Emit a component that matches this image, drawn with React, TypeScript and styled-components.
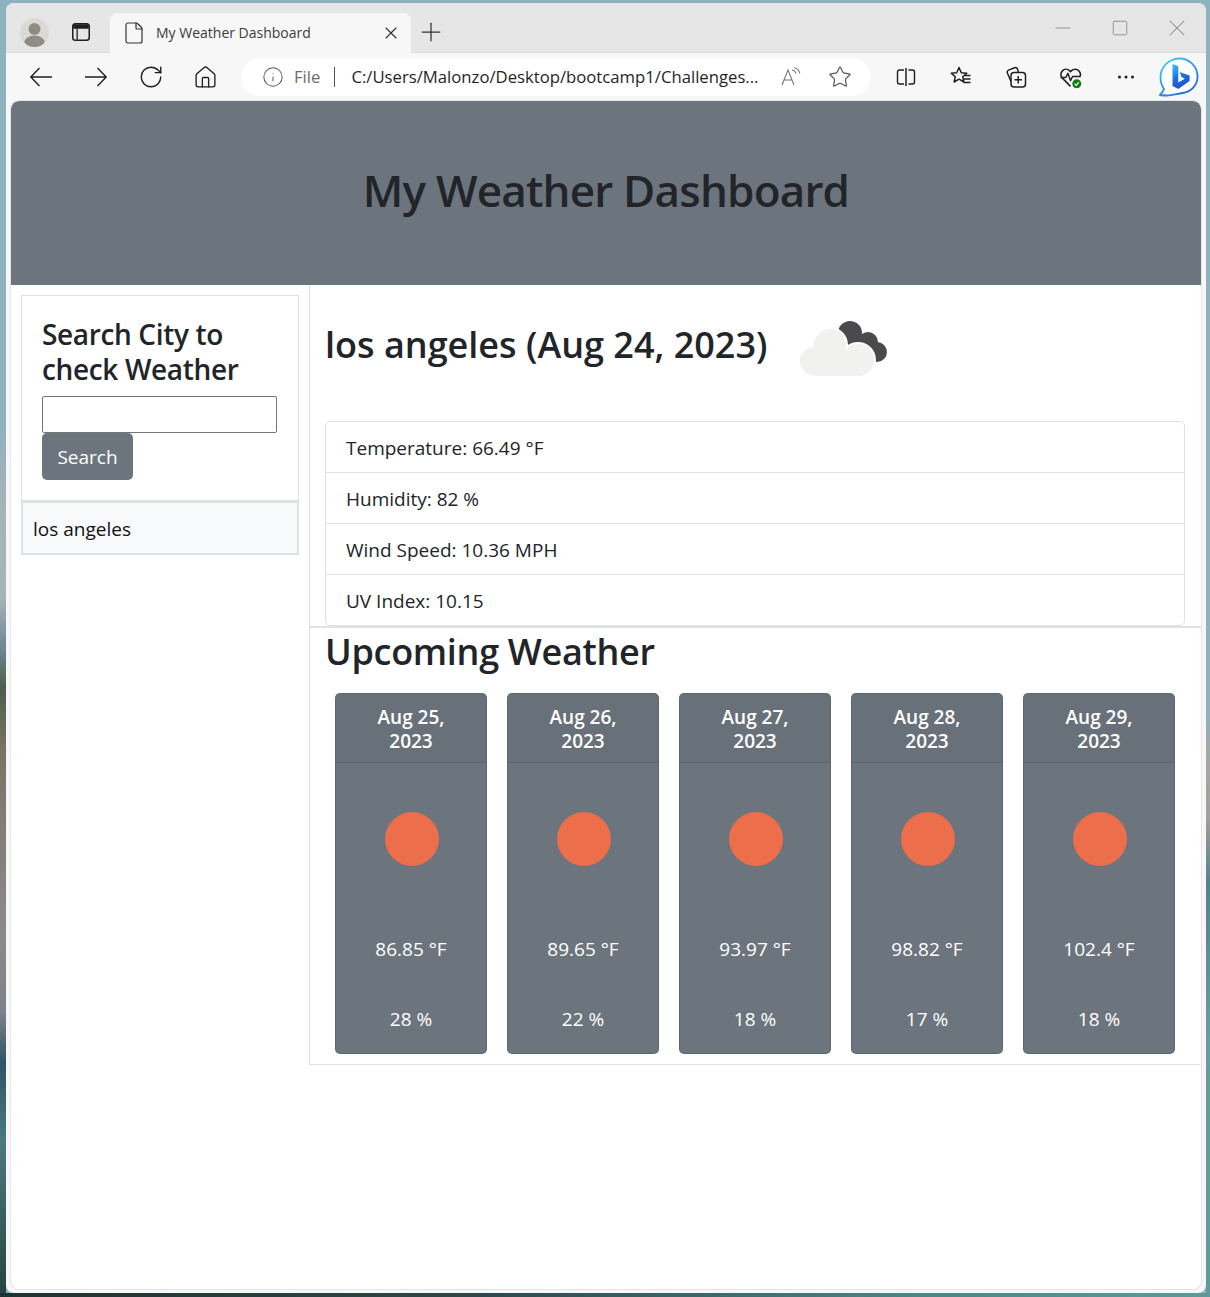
import React from 'react';
import styled, { createGlobalStyle } from 'styled-components';
import { RotateCw, Home, Info, Star, X, Plus, Minus, Square, File } from 'lucide-react';

const GlobalStyle = createGlobalStyle`
  html, body {
    margin: 0;
    padding: 0;
  }
  * {
    box-sizing: border-box;
  }
  body {
    font-family: "Open Sans", "Noto Sans", sans-serif;
    font-stretch: 94%;
    color: #212529;
  }
`;

// the wallpaper only shows as thin strips round the window
const Desktop = styled.div`
  width: 1210px;
  height: 1297px;
  padding: 3px 4px 4px 6px;
  overflow: hidden;
  background-color: #8fb2bf;
  background-repeat: no-repeat;
  background-image:
    linear-gradient(90deg, #1c3233 0%, #2c4a4b 40%, #4d8486 75%, #5f9a9b 100%),
    linear-gradient(180deg, #8fb2bf 0%, #8fb2bf 33%, #a7b1b8 38%, #a9b4ba 46%, #6d8794 50%, #4c5f4e 53%, #7c7268 58%, #8d8a8c 72%, #7d8288 78%, #2f5368 82%, #4c7a7e 88%, #25433f 100%),
    linear-gradient(180deg, #8fb2bf 0%, #8fb2bf 54%, #a5a5a0 60%, #a09f9c 63%, #56828c 68%, #6d9a9e 80%, #5f9a9b 100%);
  background-size: 100% 4px, 6px 100%, 4px 100%;
  background-position: bottom left, top left, top right;
`;

const BrowserWindow = styled.div`
  height: 100%;
  display: flex;
  flex-direction: column;
  background: #f7f7f7;
  border-radius: 8px;
  overflow: hidden;
`;

const TabStrip = styled.div`
  height: 50px;
  flex: none;
  display: flex;
  align-items: flex-end;
  background: #e6e6e6;
  border-bottom: 1px solid #dcdcdc;
  padding-left: 14px;
`;

const Avatar = styled.div`
  width: 29px;
  height: 29px;
  margin-bottom: 5px;
  border-radius: 50%;
  background: #dbd9d6;
  overflow: hidden;
`;

const PanelButton = styled.div`
  width: 61px;
  height: 40px;
  padding-left: 3px;
  display: flex;
  align-items: center;
  justify-content: center;
`;

const Tab = styled.div`
  width: 301px;
  height: 40px;
  flex: none;
  display: flex;
  align-items: center;
  padding: 0 10px 0 12px;
  margin-bottom: -1px;
  background: #f7f7f7;
  border-radius: 8px 8px 0 0;
  font-size: 14px;
  color: #3b3b3b;
`;

const TabTitle = styled.span`
  flex: 1;
  margin: 0 0 2px 10px;
`;

const NewTabButton = styled.div`
  width: 40px;
  height: 40px;
  display: flex;
  align-items: center;
  justify-content: center;
`;

const WindowButtons = styled.div`
  margin-left: auto;
  height: 100%;
  display: flex;
  align-items: center;
  padding: 0 1px 0 0;
`;

const WindowButton = styled.div`
  width: 57px;
  height: 32px;
  display: flex;
  align-items: center;
  justify-content: center;
  color: #8a8a8a;
`;

const Toolbar = styled.div`
  height: 47px;
  flex: none;
  display: flex;
  align-items: center;
  padding: 1px 0 0 7px;
`;

const NavButton = styled.div`
  width: 55px;
  height: 36px;
  flex: none;
  display: flex;
  align-items: center;
  justify-content: center;
  color: #1f1f1f;
`;

const AddressBar = styled.div`
  width: 630px;
  height: 38px;
  flex: none;
  margin: 0 7px 0 8px;
  display: flex;
  align-items: center;
  padding: 0 19px 0 21px;
  background: #ffffff;
  border-radius: 19px;
  font-size: 16.7px;
  color: #1f1f1f;
`;

const SchemeLabel = styled.span`
  margin: 0 0 2px 10px;
  color: #6d6d6d;
`;

const SchemeDivider = styled.span`
  width: 1px;
  height: 20px;
  margin: 0 16px 0 14px;
  background: #555555;
`;

const UrlText = styled.span`
  flex: 1;
  margin-bottom: 2px;
  white-space: nowrap;
`;

const ReadAloud = styled.svg`
  margin-right: 26px;
`;

const BingButton = styled.div`
  margin: 0 0 1px 6px;
  width: 40px;
  height: 40px;
  flex: none;
`;

const PageFrame = styled.div`
  flex: 1;
  min-height: 0;
  margin: 1px 5px 4px 5px;
  background: #ffffff;
  border-radius: 8px;
  box-shadow: 0 0 0 1px #e4e4e4;
  overflow: hidden;
`;

const PageHeader = styled.header`
  height: 184px;
  padding-bottom: 5px;
  display: flex;
  align-items: center;
  justify-content: center;
  background: #6c757d;
  border-radius: 8px 8px 0 0;
`;

const PageTitle = styled.h1`
  margin: 0;
  font-size: 44px;
  font-weight: 600;
  line-height: 1.2;
  letter-spacing: -0.8px;
  color: #212529;
`;

const Columns = styled.div`
  display: flex;
  align-items: flex-start;
`;

const Sidebar = styled.aside`
  width: 298px;
  flex: none;
  padding: 10px 10px 0 10px;
`;

const SearchCard = styled.section`
  height: 206px;
  padding: 21px 20px 0 20px;
  border: 1px solid #dee2e6;
`;

const SearchTitle = styled.h3`
  margin: 0 0 9px 0;
  font-size: 28px;
  font-weight: 600;
  line-height: 35px;
  letter-spacing: -0.35px;
`;

const SearchInput = styled.input`
  display: block;
  width: 235px;
  height: 37px;
  border: 1px solid #767676;
  border-radius: 2px;
  background: #ffffff;
`;

const SearchButton = styled.button`
  display: block;
  width: 91px;
  height: 47px;
  padding: 0;
  border: none;
  border-radius: 5px;
  background: #6c757d;
  color: #ffffff;
  font: inherit;
  font-size: 19px;
`;

const HistoryItem = styled.div`
  height: 54px;
  display: flex;
  align-items: center;
  padding: 1px 10px 0 10px;
  background: #f8f9fa;
  border: 2px solid #dee2e6;
  font-size: 19px;
  color: #111111;
`;

const Main = styled.main`
  flex: 1;
  min-width: 0;
  border-left: 1px solid #dee2e6;
`;

const TodaySection = styled.section`
  height: 343px;
  padding: 0 16px 0 15px;
  border-bottom: 2px solid #dee2e6;
`;

const CityRow = styled.div`
  height: 136px;
  display: flex;
  align-items: center;
`;

const CityTitle = styled.h2`
  margin: 0 0 16px 0;
  font-size: 36px;
  font-weight: 600;
  line-height: 1.2;
`;

const CloudIcon = styled.svg`
  flex: none;
  margin: 0 0 9px 33px;
`;

const StatList = styled.ul`
  margin: 0;
  padding: 0;
  list-style: none;
  border: 1px solid #dee2e6;
  border-radius: 5px;
`;

const StatRow = styled.li`
  height: 51px;
  padding: 11px 20px 9px 20px;
  font-size: 19px;
  line-height: 30px;
  border-bottom: 1px solid #dee2e6;
  &:last-child {
    height: 50px;
    border-bottom: none;
  }
`;

const ForecastSection = styled.section`
  height: 437px;
  padding: 0 15px;
  border-bottom: 1px solid #dee2e6;
`;

const ForecastTitle = styled.h2`
  margin: 0;
  padding: 2px 0 0 0;
  font-size: 36px;
  font-weight: 600;
  line-height: 43px;
  letter-spacing: -0.3px;
`;

const ForecastRow = styled.div`
  display: flex;
  gap: 20px;
  margin-top: 20px;
  padding: 0 10px;
`;

const ForecastCard = styled.article`
  width: 152px;
  height: 361px;
  flex: none;
  display: flex;
  flex-direction: column;
  align-items: center;
  background: #6c757d;
  border: 1px solid rgba(0, 0, 0, 0.125);
  border-radius: 5px;
  color: #ffffff;
  font-size: 19px;
`;

const ForecastDate = styled.div`
  width: 100%;
  height: 69px;
  padding: 11px 30px 0 30px;
  text-align: center;
  font-weight: 600;
  line-height: 24px;
  background: rgba(0, 0, 0, 0.03);
  border-bottom: 1px solid rgba(0, 0, 0, 0.125);
`;

const SunIcon = styled.div`
  width: 54px;
  height: 54px;
  margin: 49px 0 68px 2px;
  flex: none;
  border-radius: 50%;
  background: #ec6e4b;
`;

const ForecastValue = styled.div`
  height: 30px;
  line-height: 30px;
  margin-bottom: 40px;
  &:last-child {
    margin-bottom: 0;
  }
`;

const PanelIcon = () => (
  <svg width="22" height="22" viewBox="0 0 20 20" fill="none">
    <rect x="2.500" y="2.500" width="15" height="15" rx="2.500" stroke="#1f1f1f" strokeWidth="1.4" />
    <path d="M3 3h14v4H3z" fill="#1f1f1f" />
    <path d="M6.500 7v10" stroke="#1f1f1f" strokeWidth="1.2" />
  </svg>
);

const BackIcon = () => (
  <svg width="24" height="24" viewBox="0 0 24 24" fill="none" stroke="#1f1f1f" strokeWidth="1.4">
    <path d="M23 12H2M10.500 3 1.800 12l8.700 9" />
  </svg>
);

const ForwardIcon = () => (
  <svg width="24" height="24" viewBox="0 0 24 24" fill="none" stroke="#1f1f1f" strokeWidth="1.4">
    <path d="M1 12h21M13.500 3l8.700 9-8.700 9" />
  </svg>
);

const SplitIcon = () => (
  <svg width="22" height="22" viewBox="0 0 22 22" fill="none" stroke="#1f1f1f" strokeWidth="1.4">
    <path d="M9 4H4.500A2 2 0 0 0 2.500 6v10a2 2 0 0 0 2 2H9" />
    <path d="M13.500 4h4a2 2 0 0 1 2 2v10a2 2 0 0 1-2 2h-4" />
    <path d="M11 2v18" strokeWidth="1.5" />
  </svg>
);

const FavoritesIcon = () => (
  <svg width="24" height="24" viewBox="0 0 24 24" fill="none" stroke="#1f1f1f" strokeWidth="1.5" strokeLinejoin="round">
    <path d="M10 2.500l2.300 5.200 5.500.5-4.100 3.500 1.200 5.300-4.900-2.800-4.900 2.800 1.200-5.300L2.200 8.200l5.500-.5z" />
    <path d="M15.500 10.500h6M14.800 14h6.700M14.500 17.500h7" />
  </svg>
);

const CollectionsIcon = () => (
  <svg width="24" height="24" viewBox="0 0 24 24" fill="none" stroke="#1f1f1f" strokeWidth="1.5" strokeLinejoin="round">
    <path d="M7 16.500 3.400 8a2.200 2.200 0 0 1 1.200-2.900l6-2.400a2.200 2.200 0 0 1 2.800 1.200L14.500 7" />
    <rect x="7" y="7.500" width="14.500" height="14.500" rx="3" />
    <path d="M14.200 11v7.500M10.500 14.700H18" />
  </svg>
);

const HealthIcon = () => (
  <svg width="25" height="25" viewBox="0 0 24 24" fill="none">
    <path
      d="M12 20.500 4.200 12.600a5 5 0 0 1 0-7A4.900 4.900 0 0 1 11 5.400l1 1 1-1a4.900 4.900 0 0 1 7 .2 5 5 0 0 1 .8 6"
      stroke="#1f1f1f"
      strokeWidth="1.5"
    />
    <path d="M2.500 12h5l2-4 2.500 7 2-4h7" stroke="#1f1f1f" strokeWidth="1.4" strokeLinejoin="round" />
    <circle cx="18" cy="18" r="4.800" fill="#107c10" stroke="#f7f7f7" strokeWidth="1" />
    <path d="M16 18l1.500 1.500 2.500-3" stroke="#ffffff" strokeWidth="1.1" />
  </svg>
);

const MoreIcon = () => (
  <svg width="20" height="20" viewBox="0 0 20 20" fill="#1f1f1f">
    <circle cx="3.500" cy="10" r="1.500" />
    <circle cx="10" cy="10" r="1.500" />
    <circle cx="16.500" cy="10" r="1.500" />
  </svg>
);

const BingLogo = () => (
  <svg width="40" height="40" viewBox="0 0 40 40" fill="none">
    <defs>
      <linearGradient id="bing-b" x1="14" y1="8" x2="26" y2="32" gradientUnits="userSpaceOnUse">
        <stop offset="0" stopColor="#37bdff" />
        <stop offset="0.5" stopColor="#1d6fe0" />
        <stop offset="1" stopColor="#1b4fc4" />
      </linearGradient>
      <linearGradient id="bing-ring" x1="8" y1="3" x2="32" y2="38" gradientUnits="userSpaceOnUse">
        <stop offset="0" stopColor="#41c8f5" />
        <stop offset="1" stopColor="#1c62d8" />
      </linearGradient>
    </defs>
    <path
      d="M20.500 1.500C30 1.500 38.500 9 38.500 19.500c0 10-7.500 15.500-15 16.500-5 .7-11 2.500-15.500 2.500-4 0-7-.5-7-.5 1.500-1.500 3.500-3.500 4-6C2.500 28.500 1.500 24 1.500 20 1.500 9.500 10.500 1.500 20.500 1.500Z"
      fill="#ffffff"
      stroke="url(#bing-ring)"
      strokeWidth="1.8"
    />
    <path d="M13.500 7l5.800 2v16.500l6.500-3.800-3.200-1.600-2-5 10 3.500v5.500L19.300 32l-5.800-3z" fill="url(#bing-b)" />
  </svg>
);

const WeatherCloud = () => (
  <CloudIcon width="88" height="55" viewBox="0 0 88 55">
    <g fill="#4a4a4c">
      <circle cx="50" cy="12" r="12" />
      <circle cx="68" cy="21" r="10" />
      <circle cx="77" cy="31" r="10" />
      <circle cx="62" cy="26" r="13" />
    </g>
    <g fill="#ffffff">
      <circle cx="30" cy="24" r="18" />
      <circle cx="58" cy="39" r="18" />
    </g>
    <g fill="#f1f1f0">
      <circle cx="14" cy="40" r="14" />
      <circle cx="30" cy="24" r="16" />
      <circle cx="58" cy="39" r="16" />
      <rect x="14" y="34" width="44" height="21" />
    </g>
  </CloudIcon>
);

const days = [
  { date: 'Aug 25, 2023', temp: '86.85 °F', humidity: '28 %' },
  { date: 'Aug 26, 2023', temp: '89.65 °F', humidity: '22 %' },
  { date: 'Aug 27, 2023', temp: '93.97 °F', humidity: '18 %' },
  { date: 'Aug 28, 2023', temp: '98.82 °F', humidity: '17 %' },
  { date: 'Aug 29, 2023', temp: '102.4 °F', humidity: '18 %' },
];

const stats = ['Temperature: 66.49 °F', 'Humidity: 82 %', 'Wind Speed: 10.36 MPH', 'UV Index: 10.15'];

const App: React.FC = () => (
  <>
    <GlobalStyle />
    <Desktop>
      <BrowserWindow>
        <TabStrip>
          <Avatar>
            <svg width="29" height="29" viewBox="0 0 29 29" fill="#8f8c88">
              <circle cx="14.500" cy="11" r="6" />
              <ellipse cx="14.500" cy="24" rx="10" ry="6.500" />
            </svg>
          </Avatar>
          <PanelButton>
            <PanelIcon />
          </PanelButton>
          <Tab>
            <File size={24} strokeWidth={1.2} color="#333333" />
            <TabTitle>My Weather Dashboard</TabTitle>
            <X size={20} strokeWidth={1.4} color="#333333" />
          </Tab>
          <NewTabButton>
            <Plus size={30} strokeWidth={1} color="#333333" />
          </NewTabButton>
          <WindowButtons>
            <WindowButton>
              <Minus size={24} strokeWidth={0.9} />
            </WindowButton>
            <WindowButton>
              <Square size={18} strokeWidth={1.2} />
            </WindowButton>
            <WindowButton>
              <X size={28} strokeWidth={0.9} />
            </WindowButton>
          </WindowButtons>
        </TabStrip>
        <Toolbar>
          <NavButton>
            <BackIcon />
          </NavButton>
          <NavButton>
            <ForwardIcon />
          </NavButton>
          <NavButton>
            <RotateCw size={26} strokeWidth={1.3} />
          </NavButton>
          <NavButton>
            <Home size={25} strokeWidth={1.3} />
          </NavButton>
          <AddressBar>
            <Info size={22} strokeWidth={1.1} color="#555555" />
            <SchemeLabel>File</SchemeLabel>
            <SchemeDivider />
            <UrlText>C:/Users/Malonzo/Desktop/bootcamp1/Challenges...</UrlText>
            <ReadAloud width="22" height="20" viewBox="0 0 22 20" fill="none" stroke="#777777" strokeWidth="1.1">
              <path d="M2 18 8 3l6 15M4.200 13h7.600" />
              <path d="M12 3c2 .3 3.500 1.700 4 3.500M14 .8c3 .5 5.200 2.700 5.800 5.600" />
            </ReadAloud>
            <Star size={24} strokeWidth={1.2} color="#555555" />
          </AddressBar>
          <NavButton>
            <SplitIcon />
          </NavButton>
          <NavButton>
            <FavoritesIcon />
          </NavButton>
          <NavButton>
            <CollectionsIcon />
          </NavButton>
          <NavButton>
            <HealthIcon />
          </NavButton>
          <NavButton>
            <MoreIcon />
          </NavButton>
          <BingButton>
            <BingLogo />
          </BingButton>
        </Toolbar>
        <PageFrame>
          <PageHeader>
            <PageTitle>My Weather Dashboard</PageTitle>
          </PageHeader>
          <Columns>
            <Sidebar>
              <SearchCard>
                <SearchTitle>Search City to check Weather</SearchTitle>
                <SearchInput type="text" />
                <SearchButton type="button">Search</SearchButton>
              </SearchCard>
              <HistoryItem>los angeles</HistoryItem>
            </Sidebar>
            <Main>
              <TodaySection>
                <CityRow>
                  <CityTitle>los angeles (Aug 24, 2023)</CityTitle>
                  <WeatherCloud />
                </CityRow>
                <StatList>
                  {stats.map((stat) => (
                    <StatRow key={stat}>{stat}</StatRow>
                  ))}
                </StatList>
              </TodaySection>
              <ForecastSection>
                <ForecastTitle>Upcoming Weather</ForecastTitle>
                <ForecastRow>
                  {days.map((day) => (
                    <ForecastCard key={day.date}>
                      <ForecastDate>{day.date}</ForecastDate>
                      <SunIcon />
                      <ForecastValue>{day.temp}</ForecastValue>
                      <ForecastValue>{day.humidity}</ForecastValue>
                    </ForecastCard>
                  ))}
                </ForecastRow>
              </ForecastSection>
            </Main>
          </Columns>
        </PageFrame>
      </BrowserWindow>
    </Desktop>
  </>
);

export default App;
